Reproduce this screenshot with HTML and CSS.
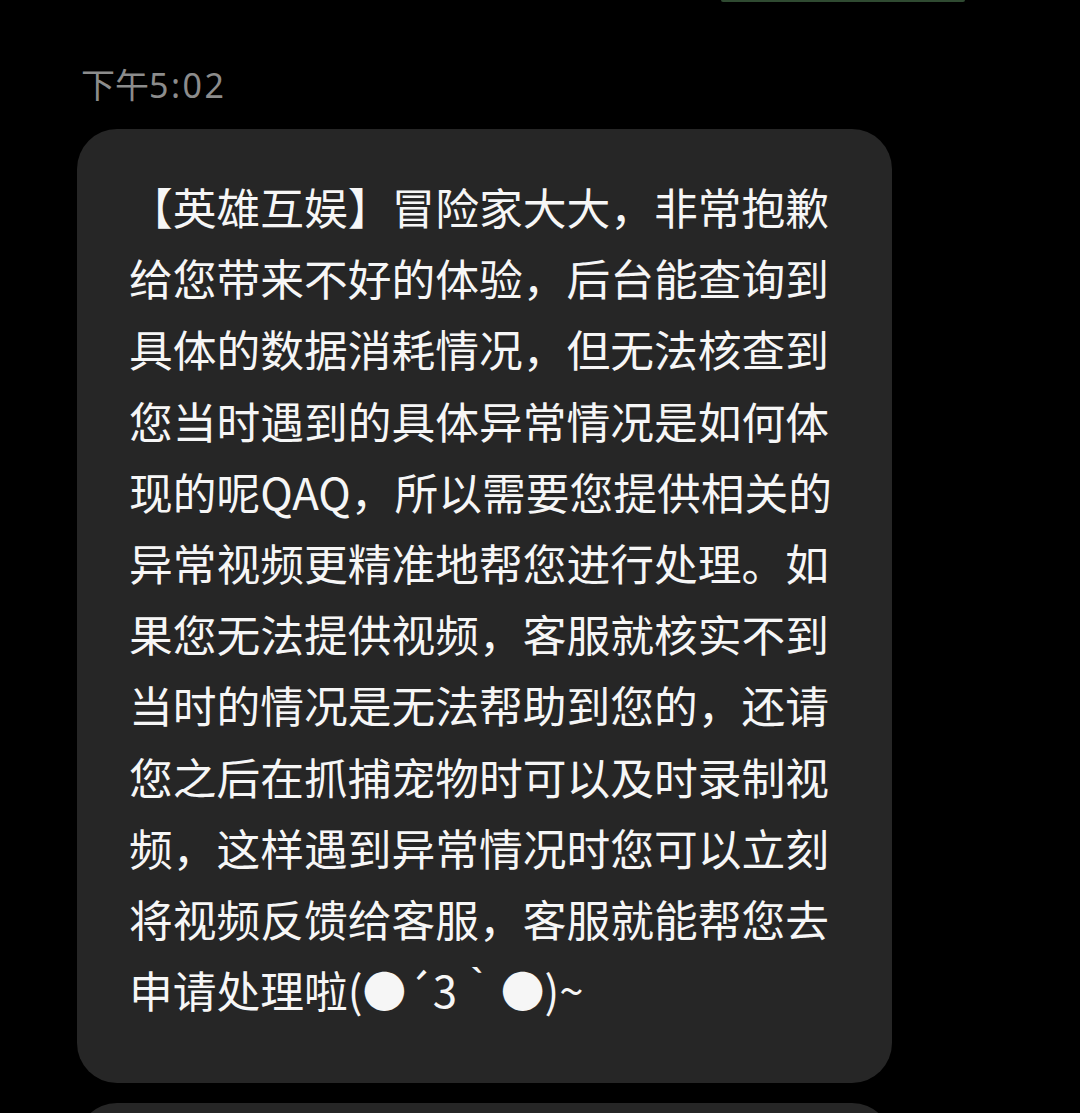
FILE: index.html
```html
<!DOCTYPE html>
<html lang="zh-CN">
<head>
<meta charset="utf-8">
<title>消息</title>
<link rel="stylesheet" href="styles.css">
</head>
<body>
<div class="sent-tail"></div>
<div class="time">下午<span class="digits">5:02</span></div>
<div class="bubble">
<p class="msg">【英雄互娱】冒险家大大，非常抱歉<br>给您带来不好的体验，后台能查询到<br>具体的数据消耗情况，但无法核查到<br>您当时遇到的具体异常情况是如何体<br>现的呢QAQ，所以需要您提供相关的<br>异常视频更精准地帮您进行处理。如<br>果您无法提供视频，客服就核实不到<br>当时的情况是无法帮助到您的，还请<br>您之后在抓捕宠物时可以及时录制视<br>频，这样遇到异常情况时您可以立刻<br>将视频反馈给客服，客服就能帮您去<br>申请处理啦(●´3｀●)~</p>
</div>
<div class="next-wrap"><div class="bubble next"></div></div>
</body>
</html>
```

FILE: styles.css
```css
html, body {
  margin: 0;
  padding: 0;
  background: #000;
  height: 1113px;
  overflow: hidden;
}
body {
  font-family: "Noto Sans CJK SC", "Noto Sans", sans-serif;
}
.sent-tail {
  margin-left: 721px;
  width: 244px;
  height: 2px;
  background: #2f4a31;
  border-radius: 0 0 3px 3px;
}
.time {
  margin: 58px 0 0 81px;
  height: 48px;
  font-size: 34px;
  line-height: 48px;
  color: #8c8c8c;
}
.digits {
  font-family: "Noto Sans", sans-serif;
  letter-spacing: 2.5px;
}
.bubble {
  margin: 21px 0 0 77px;
  width: 815px;
  background: #262626;
  border-radius: 40px;
  box-sizing: border-box;
  padding: 42px 0 0 52px;
  height: 954px;
}
.msg {
  margin: 0;
  font-size: 43.75px;
  line-height: 71.2px;
  color: #f6f6f6;
  white-space: nowrap;
}
.next-wrap {
  margin-top: 20px;
  height: 10px;
  overflow: hidden;
}
.bubble.next {
  margin-top: 0;
  height: 120px;
  padding: 0;
}
```
